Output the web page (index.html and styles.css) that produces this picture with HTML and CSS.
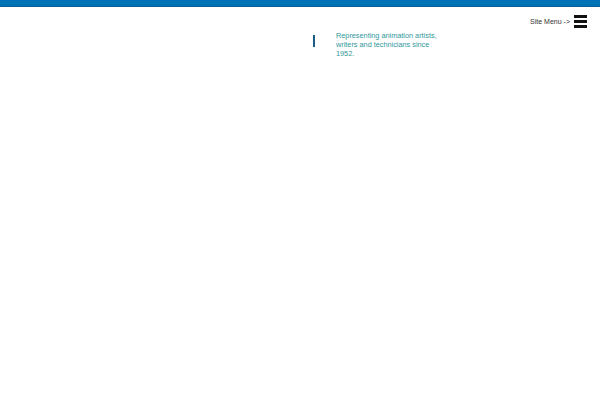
FILE: index.html
```html
<!DOCTYPE html>
<html>
<head>
<meta charset="utf-8">
<link rel="stylesheet" href="styles.css">
</head>
<body>
<div class="topbar"></div>
<header class="header">
  <div class="spacer"></div>
  <div class="tagline-wrap">
    <div class="divider"></div>
    <p class="tagline">Representing animation artists, writers and technicians since 1952.</p>
  </div>
  <div class="menu">
    <span class="menu-label">Site Menu -&gt;</span>
    <span class="burger"><i></i><i></i><i></i></span>
  </div>
</header>
</body>
</html>
```
FILE: styles.css
```css
html, body { margin: 0; padding: 0; background: #fff; }
body { font-family: "Liberation Sans", Arial, sans-serif; }
.topbar { height: 6px; background: #0073b6; border-bottom: 1px solid #0a5f94; }
.header { display: flex; align-items: flex-start; }
.spacer { width: 313px; flex: none; }
.tagline-wrap { display: flex; align-items: flex-start; padding-top: 24px; width: 160px; }
.divider { width: 2px; height: 12px; background: #1b5c86; margin-top: 4px; flex: none; }
.tagline { margin: 0 0 0 21px; width: 110px; font-size: 7.3px; line-height: 9.2px; color: #2f979c; }
.menu { margin-left: auto; display: flex; align-items: center; padding-top: 8px; padding-right: 13px; }
.menu-label { font-size: 7px; color: #333; margin-right: 4px; }
.burger { display: flex; flex-direction: column; gap: 2px; width: 13px; }
.burger i { display: block; height: 3px; background: #111; }
```
